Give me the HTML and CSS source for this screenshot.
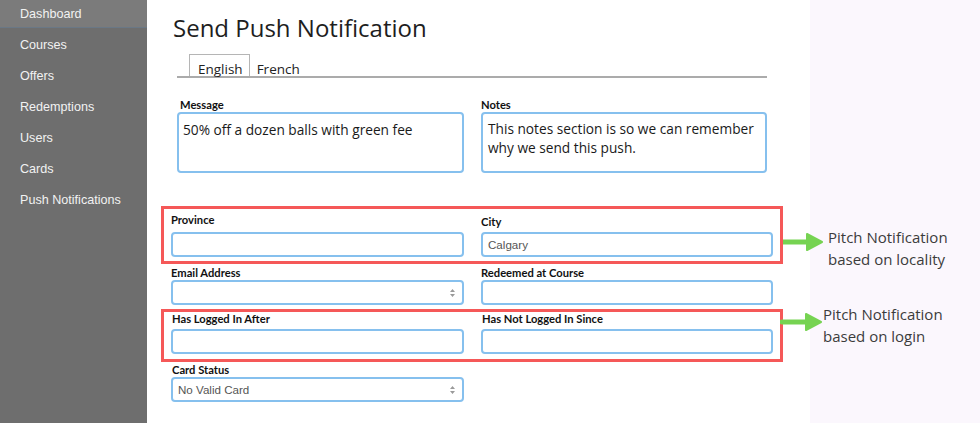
FILE: index.html
```html
<!DOCTYPE html>
<html lang="en">
<head>
<meta charset="utf-8">
<title>Send Push Notification</title>
<link rel="stylesheet" href="styles.css">
</head>
<body>
<div class="app">
  <nav class="sidebar">
    <ul class="menu">
      <li class="menu-item active">Dashboard</li>
      <li class="menu-item">Courses</li>
      <li class="menu-item">Offers</li>
      <li class="menu-item">Redemptions</li>
      <li class="menu-item">Users</li>
      <li class="menu-item">Cards</li>
      <li class="menu-item">Push Notifications</li>
    </ul>
  </nav>

  <main class="main">
    <h1 class="title">Send Push Notification</h1>

    <div class="tabs">
      <span class="tab active">English</span>
      <span class="tab">French</span>
    </div>

    <div class="text-grid">
      <div class="field">
        <div class="label label-text">Message</div>
        <div class="textarea textarea-message">50% off a dozen balls with green fee</div>
      </div>
      <div class="field">
        <div class="label label-notes">Notes</div>
        <div class="textarea">This notes section is so we can remember why we send this push.</div>
      </div>
    </div>

    <div class="filters">
      <div class="row highlight row-locality">
        <div class="field">
          <div class="label">Province</div>
          <div class="input"></div>
        </div>
        <div class="field">
          <div class="label label-city">City</div>
          <div class="input">Calgary</div>
        </div>
        <div class="annotation annotation-locality">
          <svg class="arrow" width="40" height="20" viewBox="0 0 40 20">
            <line x1="0" y1="10" x2="26" y2="10" stroke="#76d352" stroke-width="5" stroke-linecap="round"/>
            <path d="M24 2 L39 10 L24 18 Z" fill="#76d352" stroke="#76d352" stroke-width="2" stroke-linejoin="round"/>
          </svg>
          <div class="note">Pitch Notification<br>based on locality</div>
        </div>
      </div>

      <div class="row row-email">
        <div class="field">
          <div class="label">Email Address</div>
          <div class="input select">
            <span></span>
            <svg class="updown" width="7" height="10" viewBox="0 0 7 10"><path d="M3.5 1 L6 4 L1 4 Z M3.5 9 L6 6 L1 6 Z" fill="#9a9a9a"/></svg>
          </div>
        </div>
        <div class="field">
          <div class="label">Redeemed at Course</div>
          <div class="input"></div>
        </div>
      </div>

      <div class="row highlight row-login">
        <div class="field">
          <div class="label">Has Logged In After</div>
          <div class="input"></div>
        </div>
        <div class="field">
          <div class="label">Has Not Logged In Since</div>
          <div class="input"></div>
        </div>
        <div class="annotation annotation-login">
          <svg class="arrow" width="42" height="20" viewBox="0 0 42 20">
            <line x1="2" y1="10" x2="28" y2="10" stroke="#76d352" stroke-width="5" stroke-linecap="round"/>
            <path d="M26 2 L41 10 L26 18 Z" fill="#76d352" stroke="#76d352" stroke-width="2" stroke-linejoin="round"/>
          </svg>
          <div class="note">Pitch Notification<br>based on login</div>
        </div>
      </div>

      <div class="row row-card">
        <div class="field">
          <div class="label">Card Status</div>
          <div class="input select">
            <span>No Valid Card</span>
            <svg class="updown" width="7" height="10" viewBox="0 0 7 10"><path d="M3.5 1 L6 4 L1 4 Z M3.5 9 L6 6 L1 6 Z" fill="#9a9a9a"/></svg>
          </div>
        </div>
      </div>
    </div>
  </main>

  <aside class="panel"></aside>
</div>
</body>
</html>
```

FILE: styles.css
```css
* { box-sizing: border-box; }

html, body {
  margin: 0;
  padding: 0;
  height: 100%;
  overflow: hidden;
}

body {
  font-family: "Open Sans", "Noto Sans", sans-serif;
  color: #222;
  background: #fff;
}

.app {
  display: flex;
  height: 423px;
}

/* Sidebar */
.sidebar {
  width: 147px;
  flex: none;
  background: #6e6e6e;
}

.menu {
  list-style: none;
  margin: 0;
  padding: 0;
}

.menu-item {
  height: 31px;
  line-height: 31px;
  padding-left: 20px;
  font-family: "Liberation Sans", Arial, sans-serif;
  font-size: 12.6px;
  color: #f2f2f2;
}

.menu-item.active {
  background: #7b7b7b;
  border-bottom: 1px solid #6a7886;
  height: 28px;
  line-height: 29px;
  margin-bottom: 2px;
}

/* Main */
.main {
  width: 663px;
  flex: none;
  position: relative;
  background: #fff;
}

.panel {
  flex: 1;
  background: #fbf7fd;
}

.title {
  margin: 11px 0 0 26px;
  font-size: 24px;
  font-weight: 400;
  line-height: 34px;
  color: #1e1e1e;
}

.tabs {
  margin: 9px 0 0 30px;
  width: 590px;
  height: 24px;
  padding-left: 12px;
  border-bottom: 2px solid #ababab;
  display: flex;
  align-items: flex-end;
}

.tab {
  font-size: 13.5px;
  line-height: 20px;
  color: #222;
  padding: 4px 6px 0;
  height: 22px;
  border: 1px solid transparent;
  border-bottom: none;
}

.tab.active {
  border-color: #b5b5b5;
  padding: 4px 6px 0 8px;
}

/* Text areas */
.text-grid {
  margin: 21px 0 0 30px;
  width: 590px;
  display: grid;
  grid-template-columns: 287px 286px;
  column-gap: 17px;
}

.label {
  font-family: "Lato", "Open Sans", sans-serif;
  font-weight: 700;
  font-size: 11.2px;
  line-height: 12px;
  color: #111;
  margin-bottom: 5px;
}

.label-text { padding-left: 3px; margin-bottom: 1px; }
.label-notes { margin-bottom: 1px; }

.textarea {
  height: 61px;
  border: 2px solid #86c0ee;
  border-radius: 4px;
  padding: 5px 5px 4px;
  font-size: 13.7px;
  line-height: 19px;
  color: #1a1a1a;
}

.textarea-message { padding-top: 6px; padding-left: 4px; }

/* Filter rows */
.filters {
  margin: 33px 0 0 14px;
  width: 622px;
}

.row {
  position: relative;
  display: grid;
  grid-template-columns: 293px 292px;
  column-gap: 17px;
  padding: 0 7px 0 7px;
  border: 3px solid transparent;
}

.highlight {
  border-color: #f55858;
}

.row-locality { padding-top: 5px; padding-bottom: 4px; }
.row-locality .label { margin-bottom: 6px; }
.row-locality .label-city { padding-top: 2px; margin-bottom: 4px; }

.row-email { margin-top: 3px; padding-top: 0; border-width: 0 3px; }
.row-email .label { margin-bottom: 1px; }

.row-login { margin-top: 4px; padding-top: 1px; padding-bottom: 5px; }
.row-login .label { margin-bottom: 4px; padding-left: 1px; }

.row-card { border-width: 0 3px; padding-top: 2px; }
.row-card .label { margin-bottom: 1px; padding-left: 1px; }

.input {
  height: 25px;
  border: 2px solid #86c0ee;
  border-radius: 4px;
  padding: 0 5px;
  font-family: "Liberation Sans", Arial, sans-serif;
  font-size: 11.6px;
  line-height: 21px;
  color: #555;
}

.select {
  display: flex;
  align-items: center;
  justify-content: space-between;
  padding-right: 6px;
}

.updown { flex: none; }

/* Annotations */
.annotation {
  position: absolute;
  left: calc(100% + 3px);
  display: flex;
  align-items: flex-start;
  white-space: nowrap;
}

.annotation-locality { top: 17px; }
.annotation-locality .arrow { margin-top: 6px; }
.annotation-locality .note { margin-left: 5px; }

.annotation-login { top: -9px; }
.annotation-login .arrow { margin-top: 9px; margin-left: -3px; }
.annotation-login .note { margin-left: 1px; }

.note {
  font-family: "Open Sans", sans-serif;
  font-size: 15px;
  line-height: 22px;
  color: #3c3c3c;
}
```
